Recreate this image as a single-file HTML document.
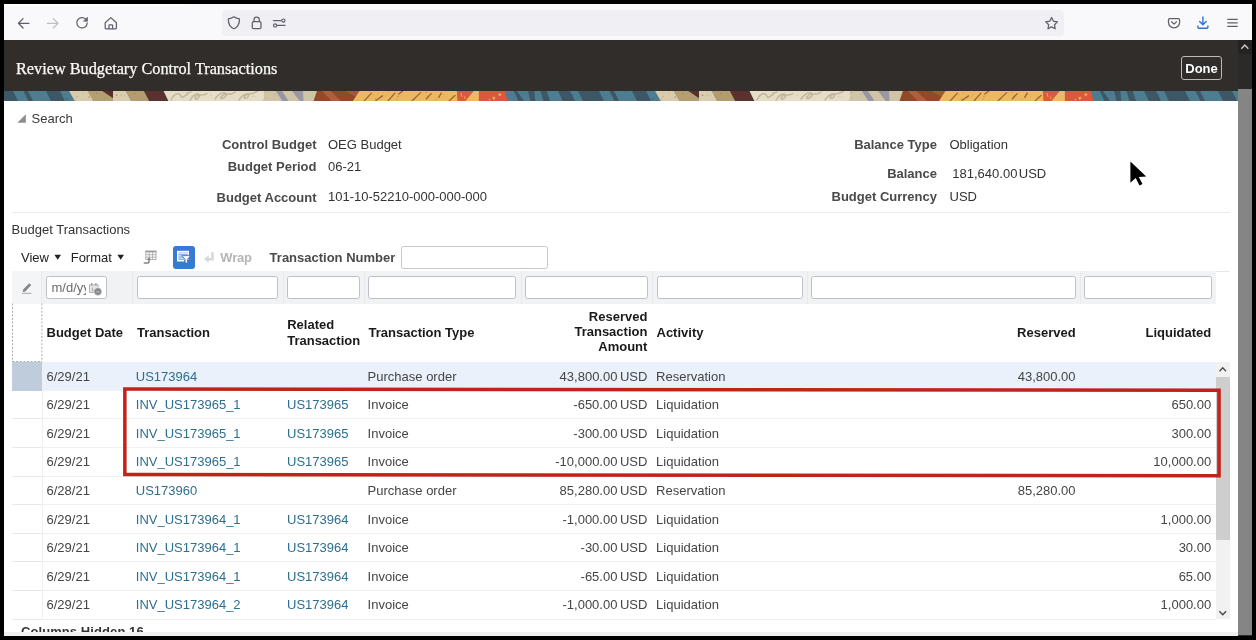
<!DOCTYPE html>
<html>
<head>
<meta charset="utf-8">
<title>Review Budgetary Control Transactions</title>
<style>
*{box-sizing:border-box;margin:0;padding:0}
html,body{width:1256px;height:640px;overflow:hidden;background:#000}
body{font-family:"Liberation Sans",sans-serif;font-size:13px;color:#454545;position:relative}
.abs{position:absolute}
#frame{position:absolute;left:4px;top:4px;width:1248px;height:632px;background:#fff;overflow:hidden}
/* all children of #frame use page coords via this offset wrapper */
#pg{position:absolute;left:-4px;top:-4px;width:1256px;height:640px;will-change:transform}
#chrome{position:absolute;left:4px;top:4px;width:1248px;height:36px;background:#f9f9fb}
#url{position:absolute;left:221.500px;top:9.500px;width:842.500px;height:26.400px;background:#f0f0f4;border-radius:4px}
#hdr{position:absolute;left:4px;top:40px;width:1248px;height:51px;background:#312d2a}
#title{position:absolute;left:16px;top:59.500px;-webkit-text-stroke:0.250px #fcfbfa;font-family:"Liberation Serif",serif;font-size:16.25px;line-height:19px;color:#fcfbfa;white-space:nowrap}
#done{position:absolute;left:1181px;top:56px;width:41px;height:24px;border:1px solid #bebbb6;border-radius:3px;color:#fff;font-weight:bold;font-size:13px;line-height:23px;text-align:center}
#strip{position:absolute;left:4px;top:90.800px;width:1234px;height:10px;filter:blur(0.350px)}
.lbl{position:absolute;font-weight:bold;color:#4a4a4a;white-space:nowrap;text-align:right;line-height:15px}
.val{position:absolute;color:#333;white-space:nowrap;line-height:15px}
.t{position:absolute;white-space:nowrap;line-height:15px}
.fin{position:absolute;top:275.900px;height:22.900px;background:#fff;border:1px solid #bcc1c8;border-radius:2.500px}
.hd{position:absolute;font-weight:bold;color:#1a1a1a;white-space:nowrap;line-height:15px}
.row{position:absolute;left:12px;width:1204px;height:28.9px;border-bottom:1px solid #f1f1f1;line-height:28.6px}
.row::before{content:"";position:absolute;left:0;bottom:-1px;width:30px;height:1px;background:#e8e8e8}
.row span{position:absolute;top:0.5px;white-space:nowrap}
.row .lk{color:#2d6f8e}
.r{text-align:right}
</style>
</head>
<body>
<div id="frame"><div id="pg">

<!-- browser chrome -->
<div id="chrome"></div>
<div class="abs" style="left:4px;top:4px;width:181px;height:2px;background:#fff"></div>
<div id="url"></div>
<svg class="abs" style="left:0;top:0" width="1256" height="44" viewBox="0 0 1256 44" fill="none" stroke="#60606b" stroke-width="1.25" stroke-linecap="round" stroke-linejoin="round">
 <!-- back -->
 <path d="M29 23.3H18.4M23.1 18.6l-4.7 4.7 4.7 4.7"/>
 <!-- forward -->
 <path d="M47.4 23.3H58M53.3 18.6l4.7 4.7-4.7 4.7" stroke="#bfbfc6"/>
 <!-- reload -->
 <path d="M87.2 22.9a5.2 5.2 0 1 1-1.6-3.9"/>
 <path d="M87.5 17.5v3.700h-3.700z" fill="#60606b" stroke-width="0.7"/>
 <!-- home -->
 <path d="M105.2 22.8l5.6-5.2 5.6 5.2v5.2a.8.8 0 0 1-.8.8h-9.6a.8.8 0 0 1-.8-.8z"/>
 <path d="M109 28.6v-3.2a.6.6 0 0 1 .6-.6h2.4a.6.6 0 0 1 .6.6v3.2"/>
 <!-- shield -->
 <path d="M233.9 16.8c1.6 1.2 3.6 1.9 5.6 2.1 0 4.600-1.8 8.200-5.600 9.900-3.800-1.700-5.600-5.300-5.600-9.900 2-.2 4-.9 5.600-2.100z"/>
 <!-- lock -->
 <rect x="252.300" y="21.700" width="8.700" height="7" rx="1.200"/>
 <path d="M254 21.600v-1.900a2.650 2.650 0 0 1 5.300 0v1.900"/>
 <!-- permissions -->
 <path d="M273.400 20.600h7.600M277.400 25.400h7.600" stroke-width="1.300"/>
 <circle cx="283.400" cy="20.600" r="1.600" stroke-width="1.200"/>
 <circle cx="275.100" cy="25.400" r="1.600" stroke-width="1.200"/>
 <!-- star -->
 <path d="M1051.600 17.500l1.800 3.700 4.100.6-3 2.900.7 4.100-3.600-1.900-3.600 1.900.7-4.100-3-2.900 4.100-.6z" stroke-width="1.250"/>
 <!-- pocket -->
 <path d="M1169.700 18.500h8.700a1.200 1.200 0 0 1 1.200 1.200v2.600a5.550 5.550 0 0 1-11.100 0v-2.600a1.200 1.200 0 0 1 1.200-1.200z" stroke-width="1.250"/>
 <path d="M1171.600 21.800l2.450 2.300 2.450-2.300" stroke-width="1.250"/>
 <!-- download -->
 <path d="M1202.900 16.900v7.600M1199.600 21.400l3.300 3.300 3.300-3.300M1197.900 25.900v1a1.400 1.400 0 0 0 1.400 1.400h7.200a1.400 1.400 0 0 0 1.400-1.400v-1" stroke="#2f6fdd" stroke-width="1.400"/>
 <!-- menu -->
 <path d="M1227.700 19.300h9.600M1227.700 22.800h9.600M1227.700 26.300h9.600" stroke-width="1.300"/>
</svg>


<!-- app header -->
<div id="hdr"></div>
<div id="title">Review Budgetary Control Transactions</div>
<div id="done">Done</div>

<!--STRIP_S--><svg id="strip" width="1234" height="10" viewBox="0 0 1234 10" preserveAspectRatio="none">
<defs><g id="tile">
<rect x="-2" y="0" width="590" height="10" fill="#4e7d90"/>
<polygon points="-12,0 9,0 14,10 -7,10" fill="#3d5766"/>
<polygon points="19.5,0 24,0 29,10 24.5,10" fill="#3d5766"/>
<polygon points="42,0 56,0 61,10 47,10" fill="#3d5766"/>
<polygon points="65.1,0 84,0 89.7,10 70.8,10" fill="#d9ccab"/>
<polygon points="83.7,0 98.5,0 109,7 109,10 89.4,10" fill="#b49e72"/>
<polygon points="98.5,0 109.2,0 109.2,7.2" fill="#55302b"/>
<polygon points="109,0 121.9,0 127.2,10 109,10" fill="#dacdaf"/>
<polygon points="121.9,0 140,0 145.3,10 127.2,10" fill="#b39d70"/>
<polygon points="140,0 159.6,0 164.4,10 145.3,10" fill="#5a312d"/>
<polygon points="159.6,0 260,0 260,10 164.4,10" fill="#e5ddc6"/>
<path d="M167 9c2-4 5-7 8-6s1 4 4 3 4-5 8-5M186 9.500c2-4 5-7 8-6.500 3 .5 1 4-1 5s-3-2 0-3.500 6 1 10-2M211 8c3-4 7-7 10-6s0 5-3 5.500 0-4.500 4-4.500 6 1 9-2M235 9c3-4 6-7 9-6 2 1-1 4.500-3 4.500s0-4.500 4-4.500c3 0 6-1 10-4" fill="none" stroke="#b5aa8b" stroke-width="1.500" stroke-linecap="round" opacity="0.750"/>
<rect x="259.900" y="0" width="54" height="10" fill="#cfc4a5"/>
<polygon points="271.8,0 278,0 284.5,10 278.3,10" fill="#9896a2"/>
<polygon points="288,0 299,0 299.5,10 295.7,10" fill="#9a98a4"/>
<polygon points="312.9,0 356,0 349.5,10 309.5,10" fill="#914a29"/>
<polygon points="318,0 326.7,0 337,10 327.7,10" fill="#a8623d"/>
<polygon points="341,0 355.5,0 352,6" fill="#a45a30"/>
<polygon points="355.5,0 454,0 454,10 348.9,10" fill="#ecb963"/>
<path d="M367.5 2.1L360.3 9.7M378.5 4.9L371.8 9.5M390.9 2.1L384.2 9.7M398.5 0.2L394.7 3M416.7 1.6L408.1 9.7M427.2 2.6L422.4 7.8M437.2 2.1L434.8 6.4M451 4.5L445.3 9.7" stroke="#87502a" stroke-width="1.300" fill="none" opacity="0.800" stroke-linecap="round"/>
<polygon points="452.9,0 469.7,0 461.5,10 453.4,10" fill="#d95b3d"/>
<polygon points="469.7,0 475,0 475,10 461.5,10" fill="#ebba66"/>
<polygon points="474.9,0 500.7,0 503.6,10 474.9,10" fill="#d8593b"/>
<path d="M488 6.500l2.500-1 1 1.800-2 1.700zM494 3.500l2.200-1.500 1.400 1.800-1.800 1.400zM484 9l1.500-1.200 1.200 1.400z" fill="#e9b461" opacity="0.900"/>
<path d="M457 2l1 4M460.500 5.500l.6 2.500" stroke="#eec278" stroke-width="0.900" opacity="0.800"/>
<polygon points="509.8,0 513,0 520,10 514.5,10" fill="#3d5766"/>
<polygon points="524,0 530.3,0 531.3,10 526.5,10" fill="#3d5766"/>
<polygon points="536.5,0 542.7,0 546,10 539.4,10" fill="#3d5766"/>
<polygon points="554,0 566,0 571,10 559,10" fill="#3d5766"/>
<polygon points="574,0 600,0 605,10 579,10" fill="#3d5766"/>
<circle cx="92.9" cy="2.2" r="0.53" fill="#5e5037" opacity="0.55"/>
<circle cx="73.6" cy="5.3" r="0.43" fill="#5e5037" opacity="0.55"/>
<circle cx="72.5" cy="5.1" r="0.31" fill="#5e5037" opacity="0.55"/>
<circle cx="101.4" cy="1.6" r="0.33" fill="#5e5037" opacity="0.55"/>
<circle cx="100.7" cy="7.6" r="0.34" fill="#5e5037" opacity="0.55"/>
<circle cx="85.2" cy="6.0" r="0.63" fill="#5e5037" opacity="0.55"/>
<circle cx="112.4" cy="4.2" r="0.64" fill="#5e5037" opacity="0.55"/>
<circle cx="71.6" cy="7.9" r="0.40" fill="#5e5037" opacity="0.55"/>
<circle cx="79.1" cy="1.9" r="0.41" fill="#5e5037" opacity="0.55"/>
<circle cx="130.8" cy="2.4" r="0.50" fill="#5e5037" opacity="0.55"/>
<circle cx="117.2" cy="4.0" r="0.49" fill="#5e5037" opacity="0.55"/>
<circle cx="72.8" cy="1.5" r="0.37" fill="#5e5037" opacity="0.55"/>
<circle cx="120.4" cy="4.4" r="0.41" fill="#5e5037" opacity="0.55"/>
<circle cx="113.1" cy="4.6" r="0.40" fill="#5e5037" opacity="0.55"/>
<circle cx="280.4" cy="6.6" r="0.39" fill="#7d7357" opacity="0.4"/>
<circle cx="248.7" cy="5.2" r="0.61" fill="#7d7357" opacity="0.4"/>
<circle cx="271.0" cy="3.3" r="0.64" fill="#7d7357" opacity="0.4"/>
<circle cx="183.0" cy="4.3" r="0.56" fill="#7d7357" opacity="0.4"/>
<circle cx="187.9" cy="4.9" r="0.31" fill="#7d7357" opacity="0.4"/>
<circle cx="262.2" cy="7.1" r="0.50" fill="#7d7357" opacity="0.4"/>
<circle cx="292.1" cy="3.5" r="0.54" fill="#7d7357" opacity="0.4"/>
<circle cx="251.6" cy="5.6" r="0.46" fill="#7d7357" opacity="0.4"/>
<circle cx="287.0" cy="8.6" r="0.47" fill="#7d7357" opacity="0.4"/>
<circle cx="261.6" cy="1.5" r="0.55" fill="#7d7357" opacity="0.4"/>
<circle cx="259.2" cy="8.9" r="0.59" fill="#7d7357" opacity="0.4"/>
<circle cx="207.0" cy="4.1" r="0.53" fill="#7d7357" opacity="0.4"/>
<circle cx="169.2" cy="4.7" r="0.36" fill="#7d7357" opacity="0.4"/>
<circle cx="182.9" cy="1.5" r="0.57" fill="#7d7357" opacity="0.4"/>
<circle cx="184.6" cy="3.0" r="0.44" fill="#7d7357" opacity="0.4"/>
<circle cx="291.5" cy="1.6" r="0.46" fill="#7d7357" opacity="0.4"/>
<circle cx="410.5" cy="8.1" r="0.59" fill="#8a5a2c" opacity="0.5"/>
<circle cx="439.5" cy="3.2" r="0.45" fill="#8a5a2c" opacity="0.5"/>
<circle cx="393.0" cy="8.1" r="0.64" fill="#8a5a2c" opacity="0.5"/>
<circle cx="373.9" cy="2.4" r="0.38" fill="#8a5a2c" opacity="0.5"/>
<circle cx="381.5" cy="4.9" r="0.51" fill="#8a5a2c" opacity="0.5"/>
<circle cx="384.2" cy="1.0" r="0.45" fill="#8a5a2c" opacity="0.5"/>
<circle cx="394.0" cy="5.5" r="0.63" fill="#8a5a2c" opacity="0.5"/>
<circle cx="423.5" cy="5.1" r="0.52" fill="#8a5a2c" opacity="0.5"/>
<circle cx="422.2" cy="1.4" r="0.61" fill="#8a5a2c" opacity="0.5"/>
<circle cx="431.8" cy="8.0" r="0.58" fill="#8a5a2c" opacity="0.5"/>
<circle cx="396.1" cy="4.2" r="0.34" fill="#8a5a2c" opacity="0.5"/>
<circle cx="418.4" cy="1.5" r="0.32" fill="#8a5a2c" opacity="0.5"/>
<circle cx="379.2" cy="2.3" r="0.42" fill="#8a5a2c" opacity="0.5"/>
<circle cx="364.8" cy="1.0" r="0.35" fill="#8a5a2c" opacity="0.5"/>
<circle cx="369.3" cy="3.9" r="0.31" fill="#8a5a2c" opacity="0.5"/>
<circle cx="440.4" cy="5.9" r="0.35" fill="#8a5a2c" opacity="0.5"/>
<circle cx="383.2" cy="3.8" r="0.43" fill="#8a5a2c" opacity="0.5"/>
<circle cx="371.3" cy="7.8" r="0.65" fill="#8a5a2c" opacity="0.5"/>
<circle cx="402.9" cy="4.9" r="0.33" fill="#8a5a2c" opacity="0.5"/>
<circle cx="369.4" cy="3.7" r="0.39" fill="#8a5a2c" opacity="0.5"/>
<circle cx="436.3" cy="2.3" r="0.31" fill="#8a5a2c" opacity="0.5"/>
<circle cx="447.5" cy="5.2" r="0.35" fill="#8a5a2c" opacity="0.5"/>
<circle cx="34.8" cy="1.2" r="0.48" fill="#2f4653" opacity="0.5"/>
<circle cx="62.6" cy="7.9" r="0.54" fill="#2f4653" opacity="0.5"/>
<circle cx="16.7" cy="3.9" r="0.36" fill="#2f4653" opacity="0.5"/>
<circle cx="49.4" cy="5.3" r="0.57" fill="#2f4653" opacity="0.5"/>
<circle cx="21.1" cy="2.8" r="0.58" fill="#2f4653" opacity="0.5"/>
<circle cx="63.0" cy="7.8" r="0.58" fill="#2f4653" opacity="0.5"/>
<circle cx="52.4" cy="6.9" r="0.38" fill="#2f4653" opacity="0.5"/>
<circle cx="33.1" cy="3.8" r="0.31" fill="#2f4653" opacity="0.5"/>
<circle cx="507.3" cy="3.2" r="0.39" fill="#2f4653" opacity="0.5"/>
<circle cx="561.1" cy="8.7" r="0.46" fill="#2f4653" opacity="0.5"/>
<circle cx="580.9" cy="8.9" r="0.63" fill="#2f4653" opacity="0.5"/>
<circle cx="534.5" cy="2.8" r="0.38" fill="#2f4653" opacity="0.5"/>
<circle cx="520.9" cy="2.6" r="0.52" fill="#2f4653" opacity="0.5"/>
<circle cx="577.9" cy="7.7" r="0.47" fill="#2f4653" opacity="0.5"/>
<circle cx="557.9" cy="7.4" r="0.33" fill="#2f4653" opacity="0.5"/>
<circle cx="558.5" cy="8.3" r="0.57" fill="#2f4653" opacity="0.5"/>
<circle cx="565.8" cy="4.8" r="0.36" fill="#2f4653" opacity="0.5"/>
<circle cx="568.9" cy="3.7" r="0.58" fill="#2f4653" opacity="0.5"/>
</g>
<clipPath id="c1"><rect x="0" y="0" width="586" height="10"/></clipPath>
</defs>
<g clip-path="url(#c1)"><use href="#tile"/></g>
<g transform="translate(586 0)"><g clip-path="url(#c1)"><use href="#tile"/></g></g>
<g transform="translate(1172 0)"><g clip-path="url(#c1)"><use href="#tile"/></g></g>
</svg><!--STRIP_E-->

<!--SEARCH_S-->
<svg class="abs" style="left:17px;top:113.500px" width="10" height="10" viewBox="0 0 10 10"><path d="M0.300 8.800L8.800 0.300V8.800z" fill="#8c8c91"/></svg>
<div class="t" style="left:31.500px;top:111.400px;color:#3a3a3a">Search</div>

<div class="lbl" style="left:116.500px;width:200px;top:136.600px">Control Budget</div>
<div class="val" style="left:328px;top:136.600px">OEG Budget</div>
<div class="lbl" style="left:116.500px;width:200px;top:159.100px">Budget Period</div>
<div class="val" style="left:328px;top:159px">06-21</div>
<div class="lbl" style="left:116.500px;width:200px;top:189.600px">Budget Account</div>
<div class="val" style="left:328px;top:188.700px">101-10-52210-000-000-000</div>

<div class="lbl" style="left:737px;width:200px;top:136.600px">Balance Type</div>
<div class="val" style="left:949.500px;top:136.600px">Obligation</div>
<div class="lbl" style="left:737px;width:200px;top:165.800px">Balance</div>
<div class="val" style="left:952.300px;top:165.800px;word-spacing:-2.200px">181,640.00 USD</div>
<div class="lbl" style="left:737px;width:200px;top:188.700px">Budget Currency</div>
<div class="val" style="left:949.500px;top:188.700px">USD</div>

<div class="abs" style="left:12px;top:212.400px;width:1218px;height:1px;background:#ebebeb"></div>

<!-- mouse cursor -->
<svg class="abs" style="left:1120px;top:155px" width="40" height="40" viewBox="1120 155 40 40"><path d="M1130.400 161.600V182.700L1135.700 178.100L1139.500 185.500L1142.500 184.100L1138.800 177.100L1146.200 176.600z" fill="#000" stroke="#fff" stroke-width="1" stroke-opacity="0.7" paint-order="stroke"/></svg>
<!--SEARCH_E-->

<!--TB_S-->
<div class="t" style="left:11.600px;top:222.400px;color:#333">Budget Transactions</div>
<div class="t" style="left:21px;top:250px;color:#222">View</div>
<svg class="abs" style="left:54px;top:254.400px" width="8" height="7" viewBox="0 0 8 7"><path d="M0.400 0.800h6.600L3.700 5.700z" fill="#222"/></svg>
<div class="t" style="left:70.700px;top:250px;color:#222">Format</div>
<svg class="abs" style="left:117px;top:254.400px" width="8" height="7" viewBox="0 0 8 7"><path d="M0.400 0.800h6.600L3.700 5.700z" fill="#222"/></svg>

<!-- freeze icon -->
<svg class="abs" style="left:140px;top:246px" width="20" height="22" viewBox="140 246 20 22" fill="none">
 <rect x="145.900" y="251.200" width="10.100" height="8.400" fill="#fff" stroke="#a6a6a6" stroke-width="0.900"/>
 <path d="M145.500 250.700h10.900v1.700h-10.900z" fill="#9c9c9c"/>
 <path d="M149.300 252v7.600M152.600 252v7.600M145.900 254.700h10.100M145.900 257.200h10.100" stroke="#adadad" stroke-width="0.900"/>
 <path d="M149 259.300v1.900a1.900 1.900 0 0 1-1.900 1.900h-2.800" stroke="#858585" stroke-width="1.500" stroke-linecap="round"/>
 <path d="M147 259.600l2-2.300 2 2.300z" fill="#858585"/>
</svg>

<!-- QBE button -->
<div class="abs" style="left:172.700px;top:246.100px;width:22.300px;height:22.700px;background:#377ad0;border-radius:3px"></div>
<svg class="abs" style="left:172px;top:246px" width="24" height="24" viewBox="172 246 24 24" fill="none">
 <path d="M177 250.800h12v1.800h-12z" fill="#fff"/>
 <path d="M177.750 251v9.700M177 260.700h7.200" stroke="#fff" stroke-width="1.500"/>
 <path d="M178.500 252.600h10v7.400h-10z" fill="#fff" opacity="0.820"/>
 <path d="M179 254.700h9.500M179 257h5M179 259.200h5" stroke="#377ad0" stroke-width="0.700" opacity="0.900"/>
 <path d="M188.400 252.500v3" stroke="#fff" stroke-width="1.200"/>
 <path d="M181.800 255.600h8.800l-3.100 3.700v3.700h-2.400v-3.700z" fill="#fff" stroke="#377ad0" stroke-width="0.900" stroke-linejoin="round"/>
</svg>

<!-- wrap -->
<svg class="abs" style="left:203px;top:250px" width="13" height="14" viewBox="203 250 13 14" fill="none"><path d="M212.500 252.200v7H207.500" stroke="#d8d8d8" stroke-width="2.600"/><path d="M208.700 255.300L204.100 259.100l4.600 3.600z" fill="#d8d8d8"/></svg>
<div class="t" style="left:220.300px;top:249.500px;color:#b5b5b5;font-weight:bold;letter-spacing:-0.200px">Wrap</div>

<div class="t" style="left:269.600px;top:249.800px;color:#4a4a4a;font-weight:bold">Transaction Number</div>
<div class="abs" style="left:400.700px;top:245.700px;width:147.800px;height:22.900px;border:1px solid #c6c8cb;border-radius:2.500px;background:#fff"></div>

<!-- filter row -->
<div class="abs" style="left:12px;top:271px;width:1218px;height:1px;background:#e6e7e9"></div>
<div class="abs" style="left:12px;top:271px;width:1203.800px;height:32.700px;background:#f1f2f4"></div>
<div class="abs" style="left:12px;top:271px;width:29.800px;height:32.700px;background:#f4f5f7"></div>
<div class="abs" style="left:41.400px;top:271px;width:1px;height:32.700px;background:#e9eaee"></div>
<div class="abs" style="left:131.800px;top:271px;width:1px;height:32.700px;background:#e8e9ed"></div>
<div class="abs" style="left:282.500px;top:271px;width:1px;height:32.700px;background:#e8e9ed"></div>
<div class="abs" style="left:364px;top:271px;width:1px;height:32.700px;background:#e8e9ed"></div>
<div class="abs" style="left:520.500px;top:271px;width:1px;height:32.700px;background:#e8e9ed"></div>
<div class="abs" style="left:652px;top:271px;width:1px;height:32.700px;background:#e8e9ed"></div>
<div class="abs" style="left:807px;top:271px;width:1px;height:32.700px;background:#e8e9ed"></div>
<div class="abs" style="left:1080px;top:271px;width:1px;height:32.700px;background:#e8e9ed"></div>

<!-- eraser icon -->
<svg class="abs" style="left:21px;top:281px" width="13" height="14" viewBox="0 0 13 14" fill="none"><path d="M2.200 8.600L8.300 2.200l2 1.900L4.300 10.500l-2.600.6z" fill="#868686"/><path d="M1 12.300h9.400" stroke="#a5a5a5" stroke-width="1"/></svg>

<div class="fin" style="left:46px;width:61px;overflow:hidden"><span style="position:absolute;left:4.500px;top:2.800px;width:34.800px;overflow:hidden;color:#6b6b6b;line-height:15px;white-space:nowrap">m/d/yy</span>
 <svg style="position:absolute;left:40.800px;top:4.800px" width="15" height="15" viewBox="0 0 15 15" fill="none">
  <path d="M1.500 2.800h8.600v7.700H1.500z" fill="#e4e6e8" stroke="#aeb2b6" stroke-width="1"/>
  <path d="M3.600 1v2.600M7.900 1v2.600" stroke="#9ea2a6" stroke-width="1.300"/>
  <path d="M4.400 5.600v3.200h1.600" stroke="#a0a4a8" stroke-width="0.900"/>
  <circle cx="9.900" cy="9.600" r="3.900" fill="#88898b" stroke="#fff" stroke-width="0.500"/>
  <path d="M8.200 10.300c.8-1 1.600-1 2.200-.4s1 .5 1.300 0" stroke="#d9d9d9" stroke-width="0.800"/>
 </svg>
</div>
<div class="fin" style="left:136.500px;width:141.100px"></div>
<div class="fin" style="left:287px;width:72.500px"></div>
<div class="fin" style="left:367.900px;width:148.100px"></div>
<div class="fin" style="left:525px;width:122.800px"></div>
<div class="fin" style="left:656.500px;width:146.200px"></div>
<div class="fin" style="left:811px;width:264.800px"></div>
<div class="fin" style="left:1084.200px;width:128.100px"></div>
<!--TB_E-->
<!--GRID_S--><svg class="abs" style="left:10px;top:303px" width="36" height="62" viewBox="10 303 36 62" fill="none"><path d="M12.500 303.600V362M41.900 303.600V362" stroke="#ababab" stroke-width="1" stroke-dasharray="2 1.600"/><path d="M12.500 361.700H42" stroke="#98a0aa" stroke-width="1" stroke-dasharray="2.200 1.400"/></svg>
<div class="hd" style="left:46.500px;top:324.900px">Budget Date</div>
<div class="hd" style="left:137px;top:324.900px">Transaction</div>
<div class="hd" style="left:287.200px;top:317.300px;line-height:15.500px">Related<br>Transaction</div>
<div class="hd" style="left:368.500px;top:324.900px">Transaction Type</div>
<div class="hd" style="left:447.400px;width:200px;top:310.100px;text-align:right;line-height:14.950px">Reserved<br>Transaction<br>Amount</div>
<div class="hd" style="left:656.500px;top:324.900px">Activity</div>
<div class="hd" style="left:875.600px;width:200px;top:324.900px;text-align:right">Reserved</div>
<div class="hd" style="left:1011.200px;width:200px;top:324.900px;text-align:right">Liquidated</div>
<div class="row" style="top:362.0px;background:#eaf1fb;"><span style="left:0;top:0;width:29.800px;height:28.600px;background:#bfccdb"></span><span style="left:34.500px">6/29/21</span><span class="lk" style="left:123.800px">US173964</span><span style="left:355.600px">Purchase order</span><span class="r" style="left:435.400px;width:200px;word-spacing:-1.100px">43,800.00 USD</span><span style="left:644.100px">Reservation</span><span class="r" style="left:863.600px;width:200px">43,800.00</span></div>
<div class="row" style="top:390.6px;"><span style="left:34.500px">6/29/21</span><span class="lk" style="left:123.800px">INV_US173965_1</span><span class="lk" style="left:275px">US173965</span><span style="left:355.600px">Invoice</span><span class="r" style="left:435.400px;width:200px;word-spacing:-1.100px">-650.00 USD</span><span style="left:644.100px">Liquidation</span><span class="r" style="left:999.200px;width:200px">650.00</span></div>
<div class="row" style="top:419.2px;"><span style="left:34.500px">6/29/21</span><span class="lk" style="left:123.800px">INV_US173965_1</span><span class="lk" style="left:275px">US173965</span><span style="left:355.600px">Invoice</span><span class="r" style="left:435.400px;width:200px;word-spacing:-1.100px">-300.00 USD</span><span style="left:644.100px">Liquidation</span><span class="r" style="left:999.200px;width:200px">300.00</span></div>
<div class="row" style="top:447.8px;"><span style="left:34.500px">6/29/21</span><span class="lk" style="left:123.800px">INV_US173965_1</span><span class="lk" style="left:275px">US173965</span><span style="left:355.600px">Invoice</span><span class="r" style="left:435.400px;width:200px;word-spacing:-1.100px">-10,000.00 USD</span><span style="left:644.100px">Liquidation</span><span class="r" style="left:999.200px;width:200px">10,000.00</span></div>
<div class="row" style="top:476.4px;"><span style="left:34.500px">6/28/21</span><span class="lk" style="left:123.800px">US173960</span><span style="left:355.600px">Purchase order</span><span class="r" style="left:435.400px;width:200px;word-spacing:-1.100px">85,280.00 USD</span><span style="left:644.100px">Reservation</span><span class="r" style="left:863.600px;width:200px">85,280.00</span></div>
<div class="row" style="top:505.0px;"><span style="left:34.500px">6/29/21</span><span class="lk" style="left:123.800px">INV_US173964_1</span><span class="lk" style="left:275px">US173964</span><span style="left:355.600px">Invoice</span><span class="r" style="left:435.400px;width:200px;word-spacing:-1.100px">-1,000.00 USD</span><span style="left:644.100px">Liquidation</span><span class="r" style="left:999.200px;width:200px">1,000.00</span></div>
<div class="row" style="top:533.6px;"><span style="left:34.500px">6/29/21</span><span class="lk" style="left:123.800px">INV_US173964_1</span><span class="lk" style="left:275px">US173964</span><span style="left:355.600px">Invoice</span><span class="r" style="left:435.400px;width:200px;word-spacing:-1.100px">-30.00 USD</span><span style="left:644.100px">Liquidation</span><span class="r" style="left:999.200px;width:200px">30.00</span></div>
<div class="row" style="top:562.2px;"><span style="left:34.500px">6/29/21</span><span class="lk" style="left:123.800px">INV_US173964_1</span><span class="lk" style="left:275px">US173964</span><span style="left:355.600px">Invoice</span><span class="r" style="left:435.400px;width:200px;word-spacing:-1.100px">-65.00 USD</span><span style="left:644.100px">Liquidation</span><span class="r" style="left:999.200px;width:200px">65.00</span></div>
<div class="row" style="top:590.8px;"><span style="left:34.500px">6/29/21</span><span class="lk" style="left:123.800px">INV_US173964_2</span><span class="lk" style="left:275px">US173964</span><span style="left:355.600px">Invoice</span><span class="r" style="left:435.400px;width:200px;word-spacing:-1.100px">-1,000.00 USD</span><span style="left:644.100px">Liquidation</span><span class="r" style="left:999.200px;width:200px">1,000.00</span></div>
<div class="abs" style="left:41.600px;top:362px;width:1px;height:257.400px;background:#eef0f3"></div>
<div class="abs" style="left:4px;top:619.900px;width:1234px;height:12px;overflow:hidden"><div class="t" style="left:17px;top:3.900px;font-weight:bold;color:#333;letter-spacing:0.080px">Columns Hidden 16</div></div>
<div class="abs" style="left:4px;top:631.900px;width:1234px;height:4.100px;background:#f1f1f1"></div>
<!--GRID_E-->

<!--SCROLL_S-->
<!-- page scrollbar -->
<div class="abs" style="left:1238.400px;top:40px;width:13.600px;height:596px;background:#2b2a29"></div>
<div class="abs" style="left:1238.400px;top:40px;width:13.600px;height:13.500px;background:#242322"></div>
<svg class="abs" style="left:1238.400px;top:40px" width="13.600" height="13.500" viewBox="0 0 13.600 13.500" fill="none"><path d="M3.300 8.700l3.500-3.700 3.500 3.700" stroke="#c9c9c9" stroke-width="1.500"/></svg>
<div class="abs" style="left:1238.400px;top:89.200px;width:13.600px;height:546px;background:#858585"></div>

<!-- grid scrollbar -->
<div class="abs" style="left:1216.300px;top:362px;width:13.500px;height:257px;background:#f1f1f1"></div>
<svg class="abs" style="left:1216.300px;top:362px" width="13.500" height="14" viewBox="0 0 13.500 14" fill="none"><path d="M3.500 9.300l3.250-3.500 3.250 3.500" stroke="#4d4d4d" stroke-width="1.300"/></svg>
<div class="abs" style="left:1216.300px;top:376.800px;width:13.500px;height:162.800px;background:#cecece"></div>
<svg class="abs" style="left:1216.300px;top:605px" width="13.500" height="14" viewBox="0 0 13.500 14" fill="none"><path d="M3.400 6.200l3.350 3.600 3.350-3.600" stroke="#444" stroke-width="1.300"/></svg>
<!-- red highlight box -->
<svg class="abs" style="left:0;top:380px" width="1256" height="105" viewBox="0 380 1256 105"><path fill-rule="evenodd" fill="#c0231a" d="M123.100 387.200L1220.800 388.450V477.500L123.100 476.250zM126.600 390.800L1217.200 392.050V474L126.600 472.750z"/></svg>
<!--SCROLL_E-->

</div></div>
</body>
</html>
